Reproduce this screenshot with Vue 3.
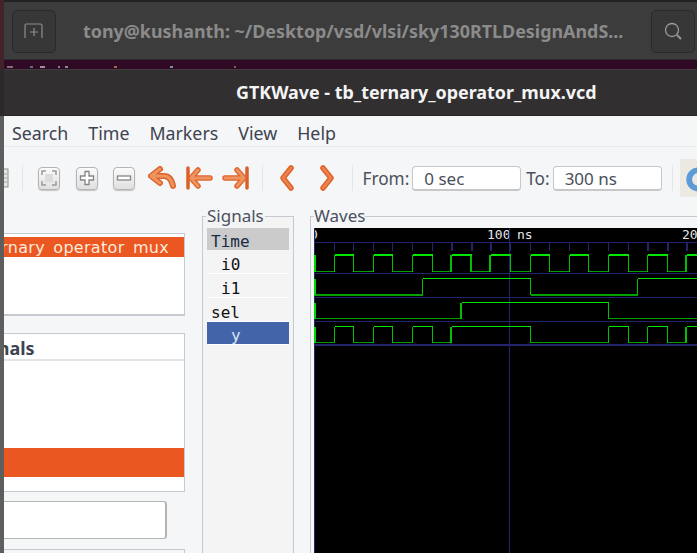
<template>
  <div class="screen">
    <header class="term-bar">
      <div class="term-btn">
        <svg width="20" height="16" viewBox="0 0 20 16" fill="none" stroke="#8e8e8e" stroke-width="1.2">
          <path d="M1 15V2.500Q1 1 2.500 1h14Q18 1 18 2.500V15M6 9h8M10 5v8" />
        </svg>
      </div>
      <div class="term-title">tony@kushanth: ~/Desktop/vsd/vlsi/sky130RTLDesignAndS...</div>
      <div class="term-btn">
        <svg width="20" height="20" viewBox="0 0 20 20" fill="none" stroke="#9a9a9a" stroke-width="1.3">
          <circle cx="9" cy="9" r="6.500" />
          <path d="M14 14l4 4" stroke-width="1.800" />
        </svg>
      </div>
    </header>
    <div class="term-gap">
      <svg class="term-specks" width="260" height="9" viewBox="0 0 260 9">
        <rect v-for="s in specks" :key="s.x" :x="s.x" y="6" :width="s.w" height="2" :fill="s.c" />
      </svg>
    </div>

    <div class="window">
      <div class="title-bar">GTKWave - tb_ternary_operator_mux.vcd</div>
      <nav class="menu">
        <span v-for="item in menuItems" :key="item">{{ item }}</span>
      </nav>

      <div class="toolbar">
        <svg class="clip-icon" width="5" height="20" viewBox="0 0 5 20">
          <rect x="-8" y="1" width="12" height="18" fill="#e6e6e4" stroke="#8f8f8f" />
          <path d="M0 6h3M0 10h3M0 14h3" stroke="#a0a0a0" />
        </svg>
        <i class="tool-sep first"></i>

        <div class="zoom-btn">
          <svg width="18" height="18" viewBox="0 0 18 18" fill="none" stroke="#9a9a9a" stroke-width="1.500">
            <rect x="5" y="5" width="8" height="8" fill="#dcdcdc" stroke="none" />
            <path d="M2 6V2h4M12 2h4v4M2 12v4h4M12 16h4v-4" />
          </svg>
        </div>
        <div class="zoom-btn">
          <svg width="18" height="18" viewBox="0 0 18 18">
            <path d="M7 2.500h4V7h4.500v4H11v4.500H7V11H2.500V7H7z" fill="#fff" stroke="#858585" stroke-width="1.300" />
          </svg>
        </div>
        <div class="zoom-btn">
          <svg width="18" height="18" viewBox="0 0 18 18">
            <rect x="2.500" y="7" width="13" height="4" fill="#fff" stroke="#858585" stroke-width="1.300" />
          </svg>
        </div>

        <svg class="arrow" width="28" height="24" viewBox="0 0 28 24" fill="none" stroke-linecap="round" stroke-linejoin="round">
          <path d="M12 3 3 10l9 7M4 10h12q7 0 9 10" stroke="#e0632a" stroke-width="6" />
          <path d="M12 3 3 10l9 7M4 10h12q7 0 9 10" stroke="#ee9460" stroke-width="3" />
        </svg>
        <svg class="arrow" width="28" height="24" viewBox="0 0 28 24" fill="none" stroke-linecap="round" stroke-linejoin="round">
          <path d="M3 2v20" stroke="#d9602a" stroke-width="3.500" />
          <path d="M13 4 6 12l7 8M7 12h18" stroke="#e0632a" stroke-width="5.500" />
          <path d="M13 4 6 12l7 8M7 12h18" stroke="#ee9460" stroke-width="2.800" />
        </svg>
        <svg class="arrow" width="28" height="24" viewBox="0 0 28 24" fill="none" stroke-linecap="round" stroke-linejoin="round">
          <path d="M25 2v20" stroke="#d9602a" stroke-width="3.500" />
          <path d="M15 4l7 8-7 8M21 12H3" stroke="#e0632a" stroke-width="5.500" />
          <path d="M15 4l7 8-7 8M21 12H3" stroke="#ee9460" stroke-width="2.800" />
        </svg>
        <i class="tool-sep"></i>

        <svg class="chevron" width="16" height="26" viewBox="0 0 16 26" fill="none" stroke-linecap="round" stroke-linejoin="round">
          <path d="M12 3 4 13l8 10" stroke="#e0632a" stroke-width="5.500" />
          <path d="M12 3 4 13l8 10" stroke="#ea8350" stroke-width="2.500" />
        </svg>
        <svg class="chevron next" width="16" height="26" viewBox="0 0 16 26" fill="none" stroke-linecap="round" stroke-linejoin="round">
          <path d="M4 3l8 10-8 10" stroke="#e0632a" stroke-width="5.500" />
          <path d="M4 3l8 10-8 10" stroke="#ea8350" stroke-width="2.500" />
        </svg>
        <i class="tool-sep"></i>

        <label class="range from">From:</label>
        <div class="range-input">0 sec</div>
        <label class="range">To:</label>
        <div class="range-input">300 ns</div>
        <i class="tool-sep last"></i>
        <div class="reload">
          <svg width="18" height="38" viewBox="0 0 18 38" fill="none">
            <circle cx="19" cy="20.500" r="9.500" stroke="#5b9bd8" stroke-width="6" />
          </svg>
        </div>
      </div>

      <main class="panes">
        <section class="left-col">
          <div class="tree-box">
            <div class="tree-row"><span>ternary operator mux</span></div>
          </div>
          <div class="signal-box">
            <div class="signal-head">Signals</div>
            <div class="signal-body">
              <div class="signal-selected"></div>
            </div>
          </div>
          <div class="filter-box"></div>
          <div class="bottom-box"></div>
        </section>

        <fieldset class="frame signals">
          <legend>Signals</legend>
          <div class="signal-list">
            <div v-for="s in signalNames" :key="s.name" class="signal-name" :class="s.cls">{{ s.name }}</div>
          </div>
        </fieldset>

        <fieldset class="frame waves">
          <legend>Waves</legend>
          <svg class="wave-canvas" width="383" height="325" viewBox="314 228 383 325" shape-rendering="crispEdges">
            <rect x="314" y="228" width="383" height="325" fill="#000" />
            <text x="310" y="239" class="ruler-text">0</text>
            <text x="487" y="239" class="ruler-text">100</text>
            <text x="517" y="239" class="ruler-text">ns</text>
            <text x="682" y="239" class="ruler-text">200</text>

            <path d="M314 242.500H697" stroke="#24246e" />
            <path v-for="t in ticks" :key="t.x" :d="`M${t.x} 242V251`" stroke="#24246e" :stroke-width="t.w" />
            <path v-for="y in rowLines" :key="y" :d="`M314 ${y}H697`" stroke="#24246e" />
            <rect x="314" y="344" width="383" height="2" fill="#24246e" />
            <path d="M314.500 228V553" stroke="#24246e" />
            <path d="M509.500 228V553" stroke="#24246e" />

            <g v-for="w in waves" :key="w.name" fill="none">
              <path :d="w.lowPath" stroke="#00a000" :stroke-width="w.lowWidth" />
              <path :d="w.edgePath" stroke="#00c000" />
              <path :d="w.thickPath" stroke="#00c000" stroke-width="2" />
              <path :d="w.highPath" stroke="#00e800" :stroke-width="w.highWidth" />
              <path :d="`M315 ${w.high}V${w.low}`" stroke="#00d800" stroke-width="2" />
            </g>
          </svg>
        </fieldset>
      </main>
    </div>

    <div class="edge-shade"></div>
  </div>
</template>

<script setup>
import { computed } from 'vue'

const menuItems = ['Search', 'Time', 'Markers', 'View', 'Help']

const signalNames = [
  { name: 'Time', cls: 'time' },
  { name: 'i0', cls: 'indent' },
  { name: 'i1', cls: 'indent' },
  { name: 'sel', cls: '' },
  { name: 'y', cls: 'picked' }
]

// tops of the terminal text that shows above the GTKWave window
const specks = [
  { x: 7, w: 6, c: '#7a6f78' },
  { x: 30, w: 3, c: '#5a6f90' },
  { x: 40, w: 5, c: '#99949a' },
  { x: 58, w: 2, c: '#7a7f95' },
  { x: 65, w: 3, c: '#8a8a95' },
  { x: 114, w: 3, c: '#a06a40' },
  { x: 170, w: 3, c: '#6f95a0' },
  { x: 234, w: 2, c: '#7a5f60' }
]

const X0 = 314
const PX_PER_NS = 1.96
const END_X = 697

const toX = (ns) => Math.round(X0 + ns * PX_PER_NS) + 0.5

// i0 toggles every 10 ns, starting low
const i0Edges = []
for (let t = 10; t < 200; t += 10) {
  i0Edges.push(t)
}

const thickTicks = [70, 80, 90, 170, 180, 190]
const ticks = computed(() => i0Edges.map((t) => ({ x: toX(t), w: thickTicks.includes(t) ? 2 : 1 })))
const rowLines = [273.5, 297.5, 321.5]

function buildWave(w) {
  let isHigh = false
  let from = X0
  let highPath = ''
  let lowPath = ''
  let edgePath = ''
  for (const t of w.edges) {
    const x = toX(t)
    if (isHigh) {
      highPath += `M${from} ${w.high}H${x}`
    } else {
      lowPath += `M${from} ${w.low}H${x}`
    }
    edgePath += `M${x} ${w.high}V${w.low}`
    from = x
    isHigh = !isHigh
  }
  if (isHigh) {
    highPath += `M${from} ${w.high}H${END_X}`
  } else {
    lowPath += `M${from} ${w.low}H${END_X}`
  }
  const thickPath = w.thick.map((t) => `M${toX(t) - 0.5} ${w.high}V${w.low}`).join('')
  return { ...w, highPath, lowPath, edgePath, thickPath }
}

const waves = computed(() => [
  { name: 'i0', edges: i0Edges, high: 254.5, low: 271.5, highWidth: 2, lowWidth: 1, thick: [70, 80, 90, 190] },
  { name: 'i1', edges: [55, 110, 165], high: 278.5, low: 295, highWidth: 1, lowWidth: 2, thick: [] },
  { name: 'sel', edges: [75, 150], high: 302.5, low: 318.5, highWidth: 1, lowWidth: 1, thick: [75] },
  {
    name: 'y',
    edges: [10, 20, 30, 40, 50, 60, 70, 110, 150, 160, 170, 180, 190],
    high: 326.5,
    low: 342.5,
    highWidth: 1,
    lowWidth: 1,
    thick: [70, 190]
  }
].map(buildWave))
</script>

<style>
html,
body {
  margin: 0;
  overflow: hidden;
  background: #f5f6f7;
}
</style>

<style scoped>
.screen {
  position: relative;
  width: 697px;
  height: 553px;
  overflow: hidden;
  font-family: "Noto Sans", "Open Sans", sans-serif;
  background: #f5f6f7;
}

.term-bar {
  display: flex;
  align-items: center;
  justify-content: space-between;
  height: 60px;
  box-sizing: border-box;
  padding: 1px 2px 0 12px;
  background: #3c3c3c;
  border-top: 2px solid #222;
  border-bottom: 1px solid #2c2c2c;
}

.term-btn {
  display: flex;
  align-items: center;
  justify-content: center;
  flex: none;
  width: 44px;
  height: 43px;
  box-sizing: border-box;
  background: #373737;
  border: 1px solid #2a2a2a;
  border-radius: 5px;
}

.term-title {
  flex: 1;
  padding-left: 27px;
  font-size: 17.900px;
  font-weight: 700;
  color: #8b8b8b;
  white-space: nowrap;
}

.term-gap {
  height: 10px;
  background: #300a24;
  border-bottom: 1px solid #3f3a3c;
  box-sizing: border-box;
}

.term-specks {
  display: block;
}

.window {
  display: flex;
  flex-direction: column;
  margin-left: 4px;
  height: 483px;
}

.title-bar {
  height: 46px;
  line-height: 44px;
  box-sizing: border-box;
  padding-left: 232px;
  font-size: 17.900px;
  font-weight: 700;
  color: #f4f4f4;
  background: #312f30;
  border-bottom: 1px solid #262626;
}

.menu {
  display: flex;
  gap: 20px;
  height: 31px;
  line-height: 34px;
  box-sizing: border-box;
  padding-left: 8px;
  font-size: 17.800px;
  color: #3d4350;
  border-bottom: 1px solid #e8e9ea;
}

.toolbar {
  display: flex;
  align-items: center;
  height: 57px;
  box-sizing: border-box;
  padding-top: 5px;
  color: #4a4f5a;
}

.clip-icon {
  margin-right: 13px;
}

.tool-sep {
  flex: none;
  width: 1px;
  height: 26px;
  background: #e4e5e6;
}

.tool-sep.first {
  margin-right: 15px;
}

.tool-sep.last {
  margin-left: 10px;
}

.zoom-btn {
  display: flex;
  align-items: center;
  justify-content: center;
  flex: none;
  width: 22px;
  height: 23px;
  margin-right: 15.500px;
  box-sizing: border-box;
  background: linear-gradient(#fbfbfb, #e0e0e0);
  border: 1px solid #b5b5b5;
  border-radius: 4px;
  box-shadow: 0 1px 1px #c4c4c4;
}

.zoom-btn svg {
  display: block;
}

.arrow {
  flex: none;
  margin-right: 12px;
  margin-left: -3px;
}

.chevron {
  flex: none;
  margin-left: 16px;
}

.chevron.next {
  margin-left: 24px;
  margin-right: 17px;
}

.range {
  margin-left: 5px;
  font-size: 17.200px;
}

.range.from {
  margin-left: 10px;
}

.range-input {
  flex: none;
  width: 109px;
  height: 25px;
  line-height: 23px;
  margin-left: 3px;
  box-sizing: border-box;
  padding-left: 11px;
  font-size: 17px;
  background: #fff;
  border: 1px solid #c5c7c9;
  border-bottom-width: 2px;
  border-radius: 4px;
}

.reload {
  display: flex;
  flex: 1;
  height: 38px;
  margin-left: 7px;
  overflow: hidden;
  background: #ece8e2;
}

.panes {
  display: grid;
  grid-template-columns: 181px 92px 1fr;
  column-gap: 17px;
  flex: 1;
  min-height: 0;
}

.left-col {
  display: flex;
  flex-direction: column;
  padding-top: 29px;
}

.tree-box {
  height: 83px;
  box-sizing: border-box;
  padding-top: 3px;
  background: #fff;
  border: 1px solid #c5c9d0;
  border-left: 0;
  border-bottom-width: 2px;
  overflow: hidden;
}

.tree-row {
  display: flex;
  justify-content: flex-end;
  height: 20px;
  line-height: 22px;
  padding-right: 15px;
  font-family: "DejaVu Sans", sans-serif;
  font-size: 16px;
  letter-spacing: 0.3px;
  word-spacing: 3px;
  white-space: nowrap;
  color: #ffeadd;
  background: #eb5720;
  overflow: hidden;
}

.signal-box {
  display: flex;
  flex-direction: column;
  flex: none;
  height: 159px;
  margin-top: 17px;
  box-sizing: border-box;
  background: #fff;
  border: 1px solid #c5c9d0;
  border-left: 0;
}

.signal-head {
  height: 27px;
  line-height: 28px;
  font-size: 18px;
  font-weight: 700;
  color: #3d4350;
  text-indent: -33px;
  border-bottom: 2px solid #e3e4e5;
  overflow: hidden;
  box-sizing: border-box;
}

.signal-body {
  flex: 1;
  padding-top: 87px;
}

.signal-selected {
  height: 29px;
  background: #eb5720;
}

.filter-box {
  flex: none;
  width: 163px;
  height: 38px;
  margin-top: 9px;
  box-sizing: border-box;
  background: #fff;
  border: 1px solid #b4b4b2;
  border-left: 0;
  border-right-width: 2px;
  border-radius: 0 3px 3px 0;
}

.bottom-box {
  flex: none;
  height: 10px;
  margin-top: 10px;
  border: 1px solid #c5c9d0;
  border-left: 0;
  border-bottom: 0;
}

.frame {
  min-width: 0;
  margin: 0;
  padding: 0;
  border: 1px solid #c5c9d0;
  border-bottom: 0;
}

.frame legend {
  padding: 0 1px;
  margin-left: 3px;
  font-size: 17px;
  line-height: 24px;
  color: #4b5160;
}

.signals {
  width: 92px;
  height: 400px;
  box-sizing: border-box;
  background: #f4f4f5;
}

.signal-list {
  padding: 0 4px;
}

.signal-name {
  height: 24px;
  line-height: 29px;
  box-sizing: border-box;
  padding-left: 4px;
  font-family: "DejaVu Sans Mono", monospace;
  font-size: 16px;
  color: #111;
  border-bottom: 1px solid #fff;
  overflow: hidden;
}

.signal-name.time {
  height: 22px;
  line-height: 27px;
  background: #cbcbcb;
  color: #1a2a44;
  border-bottom: 0;
}

.signal-name.indent {
  padding-left: 14px;
}

.signal-name.picked {
  height: 23px;
  line-height: 27px;
  padding-left: 24px;
  color: #dbe4f5;
  background: #4464aa;
}

.waves {
  margin-left: -1px;
  padding-left: 3px;
  border-right: 0;
}

.waves legend {
  margin-left: 0;
  padding: 0;
}

.wave-canvas {
  display: block;
}

.ruler-text {
  font-family: "DejaVu Sans Mono", monospace;
  font-size: 13px;
  fill: #e6e6e6;
}

.edge-shade {
  position: absolute;
  left: 0;
  top: 0;
  bottom: 0;
  width: 4px;
  background: linear-gradient(#43222a 0 69px, #2a2a2a 69px 116px, rgba(0, 0, 0, 0.62) 116px);
}
</style>
